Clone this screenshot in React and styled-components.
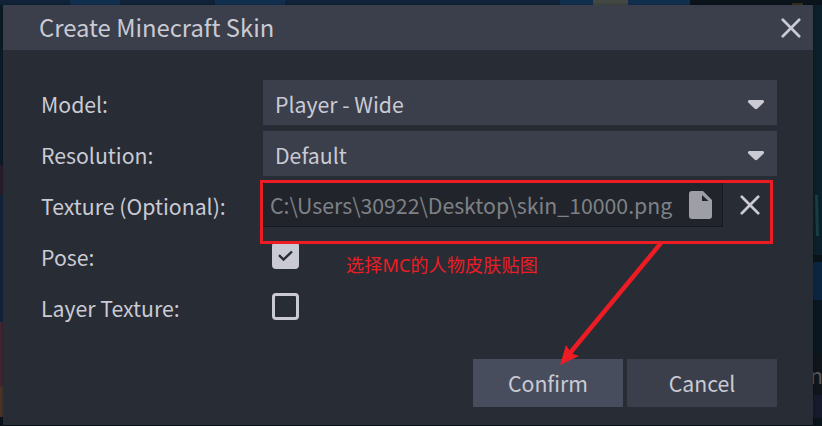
import React from "react";
import styled, { createGlobalStyle } from "styled-components";

const GlobalStyle = createGlobalStyle`
  * { box-sizing: border-box; }
  body {
    margin: 0;
    overflow: hidden;
    background: #0d1a26;
    font-family: "Noto Sans CJK SC", "Noto Sans", sans-serif;
  }
`;

const Screen = styled.div`
  position: relative;
  width: 822px;
  height: 426px;
  padding: 5px 9px 1px 3px;
  overflow: hidden;
  background: #0b131b;
`;

const Backdrop = styled.svg`
  position: absolute;
  inset: 0;
`;

const BackdropText = styled.span`
  position: absolute;
  left: 810px;
  top: 359px;
  font-size: 21.3px;
  line-height: 32px;
  color: #55585c;
`;

const Dialog = styled.section`
  position: relative;
  display: flex;
  flex-direction: column;
  height: 420px;
  background: #282c34;
  box-shadow: 0 0 3px rgba(0, 0, 0, 0.3);
  color: #cacad4;
  font-size: 21.25px;
`;

const TitleBar = styled.header`
  display: flex;
  align-items: center;
  justify-content: space-between;
  height: 45px;
  padding: 0 12px 0 36px;
  background: #3b3f4b;
`;

const Title = styled.h1`
  margin: 0;
  font-size: 23.8px;
  font-weight: 400;
  line-height: 43px;
  height: 45px;
`;

const IconButton = styled.button`
  display: flex;
  padding: 0;
  border: 0;
  background: none;
  color: #cacad4;
`;

const Form = styled.div`
  display: flex;
  flex-direction: column;
  gap: 6px;
  padding: 30px 36px 0 38px;
`;

const Row = styled.div`
  display: flex;
  height: 45px;
`;

const Label = styled.label`
  width: 222px;
  line-height: 47px;
  white-space: nowrap;
`;

const Select = styled.div`
  flex: 1;
  display: flex;
  align-items: center;
  justify-content: space-between;
  padding: 3px 12px 0;
  background: #3b3f4b;
  line-height: 42px;
`;

const FileInput = styled.div`
  display: flex;
  align-items: center;
  justify-content: space-between;
  width: 460px;
  height: 45px;
  padding: 0 10px 0 6px;
  border: 1px solid #17191f;
  background: #21252b;
  color: #7f8187;
  line-height: 42px;
  white-space: nowrap;
`;

const ClearButton = styled(IconButton)`
  align-self: center;
  margin: 0 0 0 17px;
`;

const Checkbox = styled.span`
  display: flex;
  align-items: center;
  justify-content: center;
  width: 27px;
  height: 27px;
  margin: 9px 0 0 9px;
  border: 3px solid #cacad4;
  border-radius: 4px;
  background: ${(p) => (p.$checked ? "#cacad4" : "transparent")};
`;

const Actions = styled.footer`
  display: flex;
  justify-content: flex-end;
  gap: 4px;
  margin: auto 36px 18px;
`;

const Button = styled.button`
  width: 150px;
  height: 48px;
  padding: 0;
  border: 0;
  background: ${(p) => (p.$primary ? "#474d5d" : "#3b3f4b")};
  color: #cacad4;
  font: inherit;
  line-height: 48px;
`;

const Highlight = styled.div`
  position: absolute;
  left: 260px;
  top: 180px;
  width: 513px;
  height: 64px;
  border: 3px solid #ed1c24;
`;

const Note = styled.div`
  position: absolute;
  left: 346px;
  top: 251px;
  color: #ed1c24;
  font-family: "Noto Sans", "Noto Sans CJK SC", sans-serif;
  font-size: 18px;
  letter-spacing: 0.2px;
  line-height: 28px;
  white-space: nowrap;
`;

const Arrow = styled.svg`
  position: absolute;
  inset: 0;
  pointer-events: none;
`;

const CloseIcon = () => (
  <svg width="20" height="20" viewBox="0 0 20 20" fill="none" stroke="currentColor" strokeWidth="2.7" strokeLinecap="round">
    <path d="M1.8 1.8 18.2 18.2M18.2 1.8 1.8 18.2" />
  </svg>
);

const CaretIcon = () => (
  <svg width="18" height="12" viewBox="0 -2 18 12" fill="currentColor">
    <path d="M2 0H16Q18 1 16.5 2.7L10.5 8.5Q9 9.8 7.5 8.5L1.5 2.7Q0 1 2 0Z" />
  </svg>
);

const FileIcon = () => (
  <svg width="23" height="28" viewBox="0 0 23 28">
    <path fill="#9e9ea7" fillRule="evenodd" d="M3 0H14L23 9V25Q23 28 20 28H3Q0 28 0 25V3Q0 0 3 0ZM13 4V10H19.5Z" />
  </svg>
);

const CheckIcon = () => (
  <svg width="15" height="12" viewBox="0 0 15 12" fill="none" stroke="#282c34" strokeWidth="2.4">
    <path d="M1 5.2 5.5 9.6 14 1.5" />
  </svg>
);

export default function App() {
  return (
    <Screen>
      <GlobalStyle />
      <Backdrop width="822" height="426">
        <path fill="#102338" d="M0 0H690V5H0Z" />
        <path fill="#112f4f" d="M70 0H120V5H70ZM215 0H285V5H215ZM560 0H690V5H560Z" />
        <path fill="#444a43" d="M593 0H628V5H593Z" />
        <path fill="#36321e" d="M792 3H803V5H792Z" />
        <path fill="#0b1b28" d="M0 5H3V165H0Z" />
        <path fill="#2a1d2d" d="M0 165H3V195H0Z" />
        <path fill="#10243b" d="M0 195H3V322H0Z" />
        <path fill="#402633" d="M0 322H3V386H0Z" />
        <path fill="#4a342b" d="M0 386H3V417H0Z" />
        <path fill="#0b202a" d="M813 5H822V255H813Z" />
        <path fill="#173d40" d="M815 195H818L819 236H816Z" />
        <path fill="#0b2540" d="M813 262H822V300H813Z" />
        <path fill="#0a1721" d="M813 300H822V353H813Z" />
        <path fill="#10151b" d="M813 353H822V395H813Z" />
        <path fill="#171a2c" d="M813 395H822V418H813Z" />
      </Backdrop>
      <BackdropText>n</BackdropText>
      <Dialog>
        <TitleBar>
          <Title>Create Minecraft Skin</Title>
          <IconButton aria-label="Close"><CloseIcon /></IconButton>
        </TitleBar>
        <Form>
          <Row><Label>Model:</Label><Select><span>Player - Wide</span><CaretIcon /></Select></Row>
          <Row><Label>Resolution:</Label><Select><span>Default</span><CaretIcon /></Select></Row>
          <Row>
            <Label>Texture (Optional):</Label>
            <FileInput><span>C:\Users\30922\Desktop\skin_10000.png</span><FileIcon /></FileInput>
            <ClearButton aria-label="Clear"><CloseIcon /></ClearButton>
          </Row>
          <Row><Label>Pose:</Label><Checkbox $checked><CheckIcon /></Checkbox></Row>
          <Row><Label>Layer Texture:</Label><Checkbox /></Row>
        </Form>
        <Actions>
          <Button $primary>Confirm</Button>
          <Button>Cancel</Button>
        </Actions>
      </Dialog>
      <Highlight />
      <Note>选择MC的人物皮肤贴图</Note>
      <Arrow width="822" height="426">
        <path d="M661 243 570 353" stroke="#ed1c24" strokeWidth="4.5" />
        <path fill="#ed1c24" d="M560 365 566 345 570 351 573 354 579 356Z" />
      </Arrow>
    </Screen>
  );
}
